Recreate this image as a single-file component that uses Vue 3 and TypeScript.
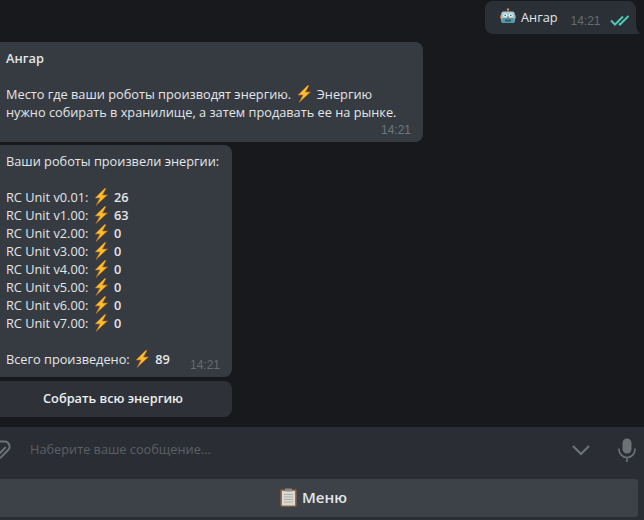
<template>
  <div class="chat">
    <div class="history">
      <div class="row-out">
        <div class="bubble out">
          <svg class="robot" viewBox="0 0 16 16" width="16" height="16">
            <circle cx="8" cy="1.4" r="1.2" fill="#e0883a" />
            <rect x="7.5" y="2" width="1" height="2" fill="#8a6f5f" />
            <rect x="0" y="7" width="2" height="4" rx="0.8" fill="#b5613c" />
            <rect x="14" y="7" width="2" height="4" rx="0.8" fill="#b5613c" />
            <rect x="1.2" y="3.5" width="13.6" height="11.5" rx="2.5" fill="#a9c8d2" />
            <rect x="1.2" y="10" width="13.6" height="5" rx="2" fill="#4f9aa6" />
            <circle cx="5.2" cy="7.3" r="2" fill="#e3f3f6" />
            <circle cx="10.8" cy="7.3" r="2" fill="#e3f3f6" />
            <circle cx="5.2" cy="7.3" r="0.9" fill="#2f7f92" />
            <circle cx="10.8" cy="7.3" r="0.9" fill="#2f7f92" />
            <rect x="7.4" y="8.5" width="1.2" height="1.6" fill="#c8473f" />
            <rect x="5" y="11.5" width="6" height="2" rx="0.5" fill="#2c5a66" />
          </svg>
          <span class="out-text">Ангар</span>
          <span class="time out-time">14:21</span>
          <svg class="ticks" viewBox="0 0 20 12" width="20" height="12">
            <path d="M1 6.5 5 10.5 13 2.5M9 9.5 10 10.5 18.5 2" fill="none" stroke="#4cc9b5" stroke-width="2" />
          </svg>
        </div>
        <svg class="tail" viewBox="0 0 5 12" width="5" height="12">
          <path d="M0 0C0 7 2 11 5 12H0Z" fill="#2b3036" />
        </svg>
      </div>

      <div class="group">
        <div class="bubble in intro">
          <div class="line strong">Ангар</div>
          <div class="line">&nbsp;</div>
          <div class="line">Место где ваши роботы производят энергию. <Bolt /> Энергию</div>
          <div class="line">нужно собирать в хранилище, а затем продавать ее на рынке.</div>
          <div class="time intro-time">14:21</div>
        </div>

        <div class="report">
          <div class="bubble in stats">
            <div class="line">Ваши роботы произвели энергии:</div>
            <div class="line">&nbsp;</div>
            <div v-for="unit in units" :key="unit.name" class="line">
              {{ unit.name }}: <Bolt /> <b>{{ unit.energy }}</b>
            </div>
            <div class="line">&nbsp;</div>
            <div class="line">Всего произведено: <Bolt /> <b>{{ total }}</b></div>
            <span class="time stats-time">14:21</span>
          </div>
          <button class="inline-btn">Собрать всю энергию</button>
        </div>
      </div>
    </div>

    <div class="composer">
      <div class="input-row">
        <svg class="clip" viewBox="0 0 12 20" width="12" height="20">
          <path d="M0 1.5H4.5a5 5 0 0 1 3.6 8.5L0.5 17.8M0 13 5.2 7.6" fill="none" stroke="#6d7275" stroke-width="2" stroke-linecap="round" />
        </svg>
        <span class="placeholder">Наберите ваше сообщение...</span>
        <svg class="chevron" viewBox="0 0 20 12" width="20" height="12">
          <path d="M2 2 10 10 18 2" fill="none" stroke="#6d7275" stroke-width="2.2" />
        </svg>
        <svg class="mic" viewBox="0 0 18 24" width="18" height="24">
          <rect x="4.5" y="0.5" width="9" height="15" rx="4.5" fill="#6d7275" />
          <path d="M1 10.5V11.5a8 8 0 0 0 16 0V10.5M9 19.5V24" fill="none" stroke="#6d7275" stroke-width="1.6" />
        </svg>
      </div>
      <button class="menu-btn">
        <svg class="clipboard" viewBox="0 0 17 19" width="17" height="19">
          <rect x="0.5" y="1.5" width="16" height="17" rx="1" fill="#a1693c" />
          <rect x="2" y="3" width="13" height="14.5" fill="#d9d8d1" />
          <rect x="5" y="0.5" width="7" height="3" rx="0.6" fill="#8c8c8c" />
          <path d="M4 6.5H13M4 9H13M4 11.5H13M4 14H13" stroke="#a9a9a5" stroke-width="0.9" />
        </svg>
        <span>Меню</span>
      </button>
    </div>
  </div>
</template>

<script setup lang="ts">
import { defineComponent, h } from 'vue'

interface Unit {
  name: string
  energy: number
}

const units: Unit[] = [
  { name: 'RC Unit v0.01', energy: 26 },
  { name: 'RC Unit v1.00', energy: 63 },
  { name: 'RC Unit v2.00', energy: 0 },
  { name: 'RC Unit v3.00', energy: 0 },
  { name: 'RC Unit v4.00', energy: 0 },
  { name: 'RC Unit v5.00', energy: 0 },
  { name: 'RC Unit v6.00', energy: 0 },
  { name: 'RC Unit v7.00', energy: 0 },
]

const total = units.reduce((sum, u) => sum + u.energy, 0)

const Bolt = defineComponent({
  render: () =>
    h('svg', { class: 'bolt', viewBox: '0 0 18 18', width: 18, height: 18 }, [
      h('path', { d: 'M12.5 0.5 3 10H8L4 17.5 15.5 7H10.5L14 0.5Z', fill: '#fbbd2e', stroke: '#b5651d', 'stroke-width': 0.7 }),
    ]),
})
</script>

<style>
html,
body {
  margin: 0;
  background: #17191d;
}

.bolt {
  vertical-align: -4px;
  margin-right: 1px;
}
</style>

<style scoped>
.chat {
  width: 644px;
  height: 520px;
  display: flex;
  flex-direction: column;
  overflow: hidden;
  background: #17191d;
  font-family: "Open Sans", "Noto Sans", sans-serif;
  font-size: 12.75px;
  line-height: 18px;
  color: #e4e6e8;
}

.history {
  height: 427px;
  padding-top: 1px;
  box-sizing: border-box;
}

.row-out {
  display: flex;
  justify-content: flex-end;
  align-items: flex-end;
  padding-right: 3px;
}

.bubble {
  box-sizing: border-box;
  border-radius: 8px;
}

.bubble.out {
  width: 151px;
  height: 33px;
  background: #2b3036;
  border-bottom-right-radius: 0;
  padding: 7px 0 0 15px;
  display: flex;
  align-items: flex-start;
}

.tail {
  display: block;
}

.out-text {
  margin-left: 5px;
}

.out-time {
  margin: 4px 0 0 13px;
}

.ticks {
  margin: 6px 0 0 9px;
}

.group {
  margin-top: 8px;
  display: flex;
  flex-direction: column;
  gap: 3px;
  margin-left: -8px;
}

.bubble.in {
  background: #363b42;
  padding: 7px 0 0 14px;
  position: relative;
}

.intro {
  width: 431px;
  height: 100px;
}

.line {
  height: 18px;
  white-space: nowrap;
}

.line b,
.strong {
  font-weight: 600;
}

.time {
  font-family: "Liberation Sans", Arial, sans-serif;
  font-size: 12px;
  color: #656b70;
}

.intro-time {
  position: absolute;
  right: 12px;
  bottom: 3px;
  color: #6a7680;
}

.report {
  width: 240px;
  display: flex;
  flex-direction: column;
  gap: 4px;
}

.stats {
  height: 232px;
}

.stats-time {
  position: absolute;
  right: 12px;
  bottom: 3px;
}

.inline-btn {
  height: 36px;
  border: none;
  border-radius: 8px;
  background: #2e3238;
  color: #eceef0;
  font: 600 12.75px "Open Sans", sans-serif;
  padding: 0 0 2px 2px;
}

.composer {
  flex: 1;
  background: #2a2e34;
  display: flex;
  flex-direction: column;
}

.input-row {
  height: 52px;
  display: flex;
  align-items: center;
  position: relative;
  padding: 0 8px 6px 30px;
  box-sizing: border-box;
}

.clip {
  position: absolute;
  left: 0;
  top: 13px;
}

.placeholder {
  flex: 1;
  color: #5b6065;
  margin-top: -2px;
}

.chevron {
  margin-right: 27px;
}

.menu-btn {
  width: 638px;
  height: 38px;
  border: none;
  border-radius: 0 3px 3px 0;
  background: #3d4249;
  color: #e4e6e8;
  font: 600 15px "Open Sans", sans-serif;
  display: flex;
  align-items: center;
  justify-content: center;
  gap: 5px;
  padding: 0 11px 2px 0;
}
</style>
